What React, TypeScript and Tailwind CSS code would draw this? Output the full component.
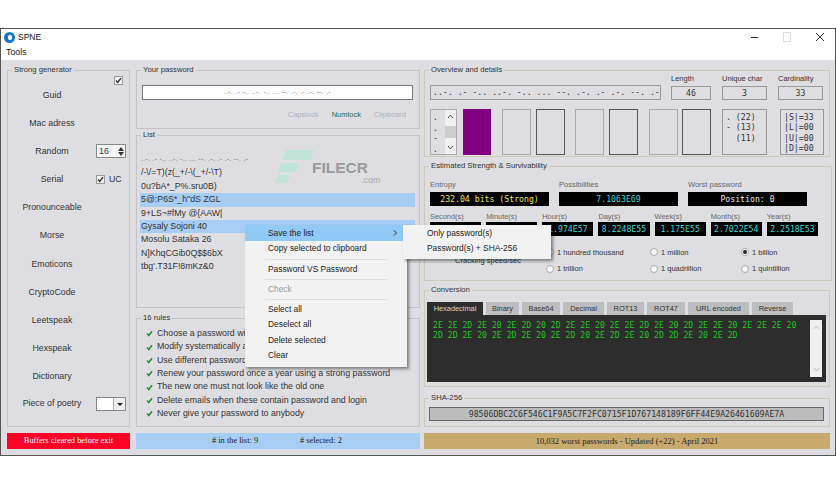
import type { ReactNode } from "react";

const morse = "..-. .- -.. ..-. -.. ... --. .-. .- .-. --. .-";
const generators = ["Guid", "Mac adress", "Random", "Serial", "Pronounceable", "Morse", "Emoticons", "CryptoCode", "Leetspeak", "Hexspeak", "Dictionary"];
const listItems = [
  { text: morse, selected: false },
  { text: "/-\\/=T)(z(_+/-\\(_+/-\\T)", selected: false },
  { text: "0u?bA*_P%.sru0B)", selected: false },
  { text: '5@:P6S*_h"dS ZGL', selected: true },
  { text: "9+LS~#fMy @{AAW|", selected: false },
  { text: "Gysaly Sojoni 40", selected: true },
  { text: "Mosolu Sataka 26", selected: false },
  { text: "N]KhqCGib0Q$$6bX", selected: false },
  { text: "tbg'.T31F!8mKz&0", selected: false },
];
const rules = [
  "Choose a password with at least 16 characters",
  "Modify systematically all your passwords",
  "Use different passwords for each account",
  "Renew your password once a year using a strong password",
  "The new one must not look like the old one",
  "Delete emails when these contain password and login",
  "Never give your password to anybody",
];
const times = [
  ["Second(s)", "7.1063E60"],
  ["Minute(s)", "1.1844E59"],
  ["Hour(s)", "1.974E57"],
  ["Day(s)", "8.2248E55"],
  ["Week(s)", "1.175E55"],
  ["Month(s)", "2.7022E54"],
  ["Year(s)", "2.2518E53"],
];
const speeds = ["1 hundred thousand", "1 million", "1 billion", "1 trillion", "1 quadrillion", "1 quintillion"];
const tabs = [
  { name: "Hexadecimal", w: "w-[56px] bg-[#2d2d2d] text-[#d8d8d8]" },
  { name: "Binary", w: "w-[33px] bg-[#bdbdbf]" },
  { name: "Base64", w: "w-[38px] bg-[#bdbdbf]" },
  { name: "Decimal", w: "w-[41px] bg-[#bdbdbf]" },
  { name: "ROT13", w: "w-[37px] bg-[#bdbdbf]" },
  { name: "ROT47", w: "w-[38px] bg-[#bdbdbf]" },
  { name: "URL encoded", w: "w-[61px] bg-[#bdbdbf]" },
  { name: "Reverse", w: "w-[41px] bg-[#bdbdbf]" },
];

function Group({ title, className, children }: { title: string; className: string; children: ReactNode }) {
  return (
    <fieldset className={`border border-[#c4c4c8] ${className}`}>
      <legend className="ml-[4px] px-[2px] text-[7.7px] leading-[12px]">{title}</legend>
      {children}
    </fieldset>
  );
}

function Tick() {
  return (
    <svg width="7" height="7" viewBox="0 0 7 7" className="shrink-0">
      <path d="M1 3.5 L2.8 5.5 L6 1.2" fill="none" stroke="#333" strokeWidth="1.4" />
    </svg>
  );
}

function CheckBox() {
  return (
    <span className="flex h-[9px] w-[9px] items-center justify-center border border-[#999] bg-[#f0f0f0]">
      <Tick />
    </span>
  );
}

function Readout({ text, color }: { text: string; color: string }) {
  return (
    <div className={`flex h-[14px] items-center justify-center bg-black font-['DejaVu_Sans_Mono',monospace] text-[8.2px] ${color}`}>
      {text}
    </div>
  );
}

function Card({ dark }: { dark?: boolean }) {
  return <div className={`h-[46px] w-[29px] border ${dark ? "border-[#555]" : "border-[#aaa]"}`} />;
}

export default function App() {
  return (
    <div className="relative h-[484px] w-[836px] overflow-hidden bg-white pt-[28px] font-['Liberation_Sans',sans-serif] text-[8.8px] text-[#333]">
      <div className="flex h-[428px] flex-col border border-[#555]">
        {/* title bar */}
        <div className="flex h-[16px] shrink-0 items-center pl-[3px] text-[8.5px] text-[#222]">
          <span className="flex h-[11px] w-[11px] items-center justify-center rounded-full bg-[#1779c4]">
            <span className="h-[5px] w-[4px] rounded-full bg-white" />
          </span>
          <span className="ml-[3px]">SPNE</span>
          <div className="ml-auto flex items-center">
            <span className="h-px w-[7px] bg-[#333]" />
            <span className="ml-[25px] h-[10px] w-[8px] border border-[#ddd]" />
            <svg width="10" height="10" viewBox="0 0 10 10" className="ml-[24px] mr-[10px]">
              <path d="M1 1 L9 9 M9 1 L1 9" stroke="#333" strokeWidth="1" />
            </svg>
          </div>
        </div>
        <div className="flex h-[15px] shrink-0 items-center pl-[5px] text-[#222]">Tools</div>

        <div className="flex min-h-0 flex-1 bg-[#dedee2] pl-[6px] pt-[4px]">
          {/* left column */}
          <div className="flex w-[123px] shrink-0 flex-col">
            <Group title="Strong generator" className="h-[363px]">
              <div className="relative">
                <div className="absolute right-[6px] top-0">
                  <CheckBox />
                </div>
                <div className="flex flex-col pt-[5px]">
                  {generators.map((name) => (
                    <div key={name} className="flex h-[28.2px] items-center">
                      <span className="w-[88px] text-center">{name}</span>
                      {name === "Random" && (
                        <div className="flex h-[14px] w-[30px] items-center justify-between border border-[#888] bg-[#f4f4f4] pl-[2px] pr-[1px]">
                          16
                          <span className="flex flex-col gap-[1px] text-[#333]">
                            <span className="h-0 w-0 border-x-[3px] border-b-[4px] border-x-transparent border-b-[#333]" />
                            <span className="h-0 w-0 border-x-[3px] border-t-[4px] border-x-transparent border-t-[#333]" />
                          </span>
                        </div>
                      )}
                      {name === "Serial" && (
                        <div className="flex items-center gap-[4px]">
                          <CheckBox />
                          UC
                        </div>
                      )}
                    </div>
                  ))}
                  <div className="flex h-[26px] items-center">
                    <span className="w-[88px] text-center">Piece of poetry</span>
                    <div className="flex h-[14px] w-[30px] items-center justify-end border border-[#888] bg-white">
                      <span className="flex h-full w-[12px] items-center justify-center border-l border-[#aaa] bg-[#eee]">
                        <span className="h-0 w-0 border-x-[3px] border-t-[3px] border-x-transparent border-t-[#222]" />
                      </span>
                    </div>
                  </div>
                </div>
              </div>
            </Group>
            <div className="mt-[6px] flex h-[16px] items-center justify-center bg-[#ff0026] font-['Liberation_Serif',serif] text-[8.4px] text-white">
              Buffers cleared before exit
            </div>
          </div>

          {/* middle column */}
          <div className="ml-[6px] flex w-[284px] shrink-0 flex-col">
            <Group title="Your password" className="h-[65px]">
              <div className="ml-[5px] mt-[9px] flex h-[15px] w-[271px] items-center justify-center border border-[#777] bg-white text-[6px] tracking-[0.57px]">
                {morse}
              </div>
              <div className="mr-[13px] mt-[9px] flex justify-end gap-[13px] text-[7.5px] text-[#b4b4b8]">
                <span>Capslock</span>
                <span className="text-[#2a6b40]">Numlock</span>
                <span>Clipboard</span>
              </div>
            </Group>
            <Group title="List" className="h-[179px]">
              <div className="ml-[3px] mt-[12px] w-[275px]">
                {listItems.map((item, i) => (
                  <div key={item.text} className={`flex h-[13.4px] items-center pl-[1px] ${i === 0 ? "text-[6px] tracking-[0.57px]" : ""} ${item.selected ? "bg-[#a6cdf4]" : ""}`}>
                    {item.text}
                  </div>
                ))}
              </div>
            </Group>
            <Group title="16 rules" className="mt-[4px] h-[115px]">
              <div className="ml-[9px] mt-[3px]">
                {rules.map((rule) => (
                  <div key={rule} className="flex h-[13.35px] items-center gap-[4px] whitespace-nowrap">
                    <svg width="7" height="7" viewBox="0 0 7 7" className="shrink-0">
                      <path d="M1 3.5 L2.8 5.5 L6 1.2" fill="none" stroke="#2a8a2a" strokeWidth="1.5" />
                    </svg>
                    {rule}
                  </div>
                ))}
              </div>
            </Group>
            <div className="mt-[6px] flex h-[16px] items-center bg-[#a6cdf4] pl-[76px] font-['Liberation_Serif',serif] text-[8.4px] text-[#222]">
              <span className="w-[88px]"># in the list: 9</span>
              <span># selected: 2</span>
            </div>
          </div>

          {/* right column */}
          <div className="ml-[4px] flex w-[406px] shrink-0 flex-col">
            <Group title="Overview and details" className="h-[93px] border-[#cfc9b8]">
              <div className="-mt-[3px] ml-[5px] flex h-[27px] items-end text-[7.5px]">
                <div className="flex h-[15px] w-[231px] items-center border border-[#999] pl-[2px] font-['DejaVu_Sans_Mono',monospace] text-[8.2px]">{morse}</div>
                <div className="ml-[10px] w-[40px]">
                  <div className="h-[13px] whitespace-nowrap leading-[12px]">Length</div>
                  <div className="flex h-[14px] items-center justify-center border border-[#999] font-['DejaVu_Sans_Mono',monospace] text-[8.2px]">46</div>
                </div>
                <div className="ml-[11px] w-[45px]">
                  <div className="h-[13px] whitespace-nowrap leading-[12px]">Unique char</div>
                  <div className="flex h-[14px] items-center justify-center border border-[#999] font-['DejaVu_Sans_Mono',monospace] text-[8.2px]">3</div>
                </div>
                <div className="ml-[11px] w-[45px]">
                  <div className="h-[13px] whitespace-nowrap leading-[12px]">Cardinality</div>
                  <div className="flex h-[14px] items-center justify-center border border-[#999] font-['DejaVu_Sans_Mono',monospace] text-[8.2px]">33</div>
                </div>
              </div>
              <div className="ml-[5px] mt-[9px] flex h-[46px]">
                <div className="flex w-[27px] border border-[#aaa] font-['DejaVu_Sans_Mono',monospace] text-[8.2px] leading-[10.5px]">
                  <div className="w-[14px] pl-[2px] pt-[2px]">
                    <div>.</div>
                    <div>.</div>
                    <div>-</div>
                    <div>.</div>
                  </div>
                  <div className="flex flex-1 flex-col items-center justify-between bg-[#f0f0f0] py-[4px]">
                    <svg width="7" height="5" viewBox="0 0 7 5"><path d="M1 4 L3.5 1 L6 4" fill="none" stroke="#555" /></svg>
                    <div className="h-[12px] w-full bg-[#cdcdcd]" />
                    <svg width="7" height="5" viewBox="0 0 7 5"><path d="M1 1 L3.5 4 L6 1" fill="none" stroke="#555" /></svg>
                  </div>
                </div>
                <div className="ml-[6px] h-[46px] w-[28px] bg-[#800080]" />
                <div className="ml-[11px]"><Card /></div>
                <div className="ml-[5px]"><Card dark /></div>
                <div className="ml-[10px]"><Card /></div>
                <div className="ml-[5px]"><Card dark /></div>
                <div className="ml-[11px]"><Card /></div>
                <div className="ml-[4px]"><Card dark /></div>
                <div className="ml-[11px] w-[45px] whitespace-pre border border-[#999] pl-[3px] pt-[2px] font-['DejaVu_Sans_Mono',monospace] text-[8.2px] leading-[10.3px]">
                  <div>. (22)</div>
                  <div>- (13)</div>
                  <div>  (11)</div>
                </div>
                <div className="ml-[13px] w-[44px] border border-[#999] pl-[3px] pt-[2px] font-['DejaVu_Sans_Mono',monospace] text-[8.2px] leading-[10.3px]">
                  <div>|S|=33</div>
                  <div>|L|=00</div>
                  <div>|U|=00</div>
                  <div>|D|=00</div>
                </div>
              </div>
            </Group>

            <Group title="Estimated Strength & Survivability" className="mt-[3px] h-[121px] border-[#cfc9b8]">
              <div className="ml-[5px] mt-[7px] flex gap-[10px] text-[7.5px]">
                <div className="w-[119px]">
                  <div className="mb-[1px] h-[12px] leading-[12px] text-[#666]">Entropy</div>
                  <Readout text="232.04 bits (Strong)" color="text-[#e6e65a]" />
                </div>
                <div className="w-[119px]">
                  <div className="mb-[1px] h-[12px] leading-[12px] text-[#666]">Possibilities</div>
                  <Readout text="7.1063E69" color="text-[#3fd6d6]" />
                </div>
                <div className="w-[119px]">
                  <div className="mb-[1px] h-[12px] leading-[12px] text-[#666]">Worst password</div>
                  <Readout text="Position: 0" color="text-[#e8e8e8]" />
                </div>
              </div>
              <div className="ml-[5px] mt-[5px] grid w-[388px] grid-cols-7 gap-x-[5px] text-[7.4px]">
                {times.map(([label, value]) => (
                  <div key={label}>
                    <div className="h-[11px] leading-[11px] text-[#666]">{label}</div>
                    <Readout text={value} color="text-[#3fd6d6]" />
                  </div>
                ))}
              </div>
              <div className="ml-[5px] mt-[8px] flex text-[7.5px]">
                <div className="flex w-[116px] items-center justify-center">Cracking speed/sec</div>
                <div className="grid grid-cols-[104px_91px_90px]">
                  {speeds.map((speed) => (
                    <div key={speed} className="flex h-[16.5px] items-center gap-[3px]">
                      <span className="flex h-[8px] w-[8px] items-center justify-center rounded-full border border-[#aaa] bg-[#f6f6f6]">
                        {speed === "1 billion" && <span className="h-[4px] w-[4px] rounded-full bg-[#222]" />}
                      </span>
                      {speed}
                    </div>
                  ))}
                </div>
              </div>
            </Group>

            <Group title="Conversion" className="mt-[3px] h-[103px] border-[#cfc9b8]">
              <div className="ml-[2px] mt-[6px] flex h-[13px] gap-[3px] text-[7.4px]">
                {tabs.map((tab) => (
                  <div key={tab.name} className={`flex items-center justify-center ${tab.w}`}>{tab.name}</div>
                ))}
              </div>
              <div className="ml-[2px] flex h-[67px] w-[399px] bg-[#2d2d2d] pl-[6px] pt-[5px]">
                <div className="w-[377px] whitespace-pre-wrap font-['DejaVu_Sans_Mono',monospace] text-[8.17px] leading-[10px] text-[#22c722]">
                  {"2E 2E 2D 2E 20 2E 2D 20 2D 2E 2E 20 2E 2E 2D 2E 20 2D 2E 2E 20 2E 2E 2E 20\n2D 2D 2E 20 2E 2D 2E 20 2E 2D 20 2E 2D 2E 20 2D 2D 2E 20 2E 2D"}
                </div>
                <div className="flex h-[57px] w-[12px] flex-col items-center justify-between bg-[#f0f0f0] py-[5px]">
                  <svg width="7" height="5" viewBox="0 0 7 5"><path d="M1 4 L3.5 1 L6 4" fill="none" stroke="#bbb" /></svg>
                  <svg width="7" height="5" viewBox="0 0 7 5"><path d="M1 1 L3.5 4 L6 1" fill="none" stroke="#bbb" /></svg>
                </div>
              </div>
            </Group>

            <Group title="SHA-256" className="mt-[5px] h-[35px] border-[#cfc9b8]">
              <div className="ml-[4px] mt-[3px] flex h-[14px] w-[395px] items-center justify-center border border-[#666] bg-[#bcbcbc] font-['DejaVu_Sans_Mono',monospace] text-[8.2px]">
                98506DBC2C6F546C1F9A5C7F2FC0715F1D767148189F6FF44E9A26461609AE7A
              </div>
            </Group>

            <div className="mt-[6px] flex h-[16px] items-center justify-center bg-[#c8a96e] font-['Liberation_Serif',serif] text-[8.5px] text-[#222]">
              10,032 worst passwords - Updated (+22) - April 2021
            </div>
          </div>
        </div>
      </div>

      {/* watermark */}
      <div className="pointer-events-none absolute left-[275px] top-[150px] h-[36px] w-[108px]">
        <svg width="40" height="34" viewBox="0 0 40 34" className="absolute left-0 top-0">
          <path d="M11 0 H39 L36 10 H8 Z M6 13 H24 L21 22 H3 Z M3 25 H15 L12 33 H0 Z" fill="#bfe3d6" />
        </svg>
        <span className="absolute left-[37px] top-[8px] text-[15.5px] font-bold leading-[20px] text-[#9a9a9a]">FILECR</span>
        <span className="absolute left-[86px] top-[25px] text-[9px] leading-[11px] text-[#aaa]">.com</span>
      </div>

      {/* context menu */}
      <div className="absolute left-[245px] top-[225px] w-[162px] bg-[#f2f2f2] pb-[3px] text-[8.4px] text-[#222] shadow-[2px_2px_3px_rgba(0,0,0,0.45)]">
        <div className="flex h-[16px] items-center justify-between bg-[#91c9f7] pl-[23px] pr-[10px]">
          Save the list
          <svg width="4" height="6" viewBox="0 0 4 6"><path d="M1 0.5 L3.5 3 L1 5.5" fill="none" stroke="#333" /></svg>
        </div>
        <div className="flex h-[15.5px] items-center pl-[23px]">Copy selected to clipboard</div>
        <div className="mx-[20px] my-[2px] border-t border-[#ddd]" />
        <div className="flex h-[15px] items-center pl-[23px]">Password VS Password</div>
        <div className="mx-[20px] my-[2px] border-t border-[#ddd]" />
        <div className="flex h-[15px] items-center pl-[23px] text-[#999]">Check</div>
        <div className="mx-[20px] my-[2px] border-t border-[#ddd]" />
        <div className="flex h-[15.5px] items-center pl-[23px]">Select all</div>
        <div className="flex h-[15.5px] items-center pl-[23px]">Deselect all</div>
        <div className="flex h-[15.5px] items-center pl-[23px]">Delete selected</div>
        <div className="flex h-[15.5px] items-center pl-[23px]">Clear</div>
      </div>
      <div className="absolute left-[403px] top-[225px] w-[148px] bg-[#f2f2f2] pb-[2px] text-[8.4px] text-[#222] shadow-[2px_2px_3px_rgba(0,0,0,0.45)]">
        <div className="flex h-[16px] items-center pl-[24px]">Only password(s)</div>
        <div className="flex h-[15.5px] items-center pl-[24px]">Password(s) + SHA-256</div>
      </div>
    </div>
  );
}
